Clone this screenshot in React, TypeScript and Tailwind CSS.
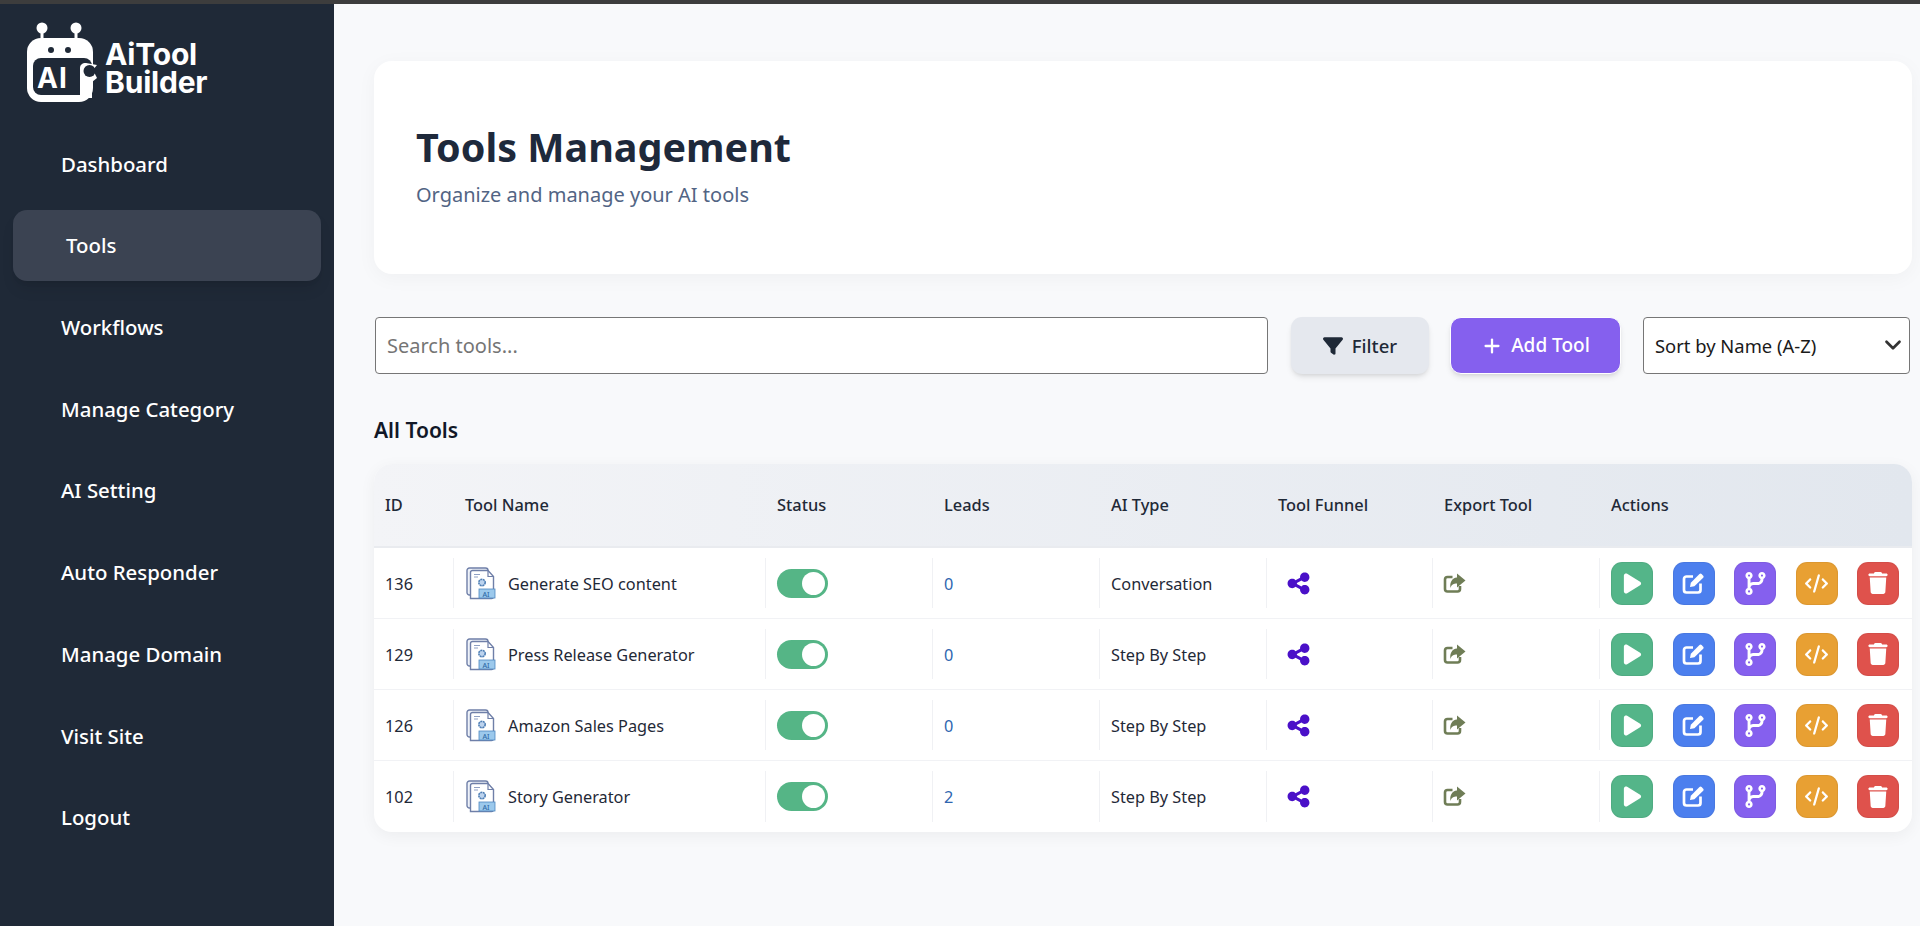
import { FaCode, FaCodeBranch, FaFilter, FaPlay, FaShareNodes, FaTrash } from "react-icons/fa6";
import { ChevronDown, Plus } from "lucide-react";

const navItems = ["Dashboard", "Tools", "Workflows", "Manage Category", "AI Setting", "Auto Responder", "Manage Domain", "Visit Site", "Logout"];

const tools = [
  { id: 136, name: "Generate SEO content", leads: 0, type: "Conversation" },
  { id: 129, name: "Press Release Generator", leads: 0, type: "Step By Step" },
  { id: 126, name: "Amazon Sales Pages", leads: 0, type: "Step By Step" },
  { id: 102, name: "Story Generator", leads: 2, type: "Step By Step" },
];

const columns = "grid grid-cols-[80px_312px_167px_167px_167px_166px_167px_1fr]";

function Logo() {
  return (
    <svg width="74" height="86" viewBox="0 0 74 86" className="shrink-0">
      <line x1="16" y1="8" x2="16" y2="20" stroke="#fff" strokeWidth="3" />
      <line x1="50" y1="8" x2="50" y2="20" stroke="#fff" strokeWidth="3" />
      <circle cx="16" cy="6" r="5.5" fill="#fff" />
      <circle cx="50" cy="6" r="5.5" fill="#fff" />
      <rect x="1" y="16" width="66" height="64" rx="14" fill="#fff" />
      <circle cx="25" cy="28" r="3" fill="#1f2937" />
      <circle cx="42" cy="28" r="3" fill="#1f2937" />
      <rect x="7" y="36" width="59" height="37" rx="8" fill="#1f2937" />
      <path d="M54 76 V46 C54 43 56 41 60 41 L71 43 L67 48 L71 56 L66 60 V76 Z" fill="#fff" />
      <circle cx="63.5" cy="49" r="6" fill="#1f2937" />
      <text x="11" y="66" fill="#fff" fontFamily="Inter, sans-serif" fontWeight="700" fontSize="28" letterSpacing="1">AI</text>
    </svg>
  );
}

function ToolIcon() {
  return (
    <svg width="32" height="33" viewBox="0 0 32 33" fill="none" className="ml-px shrink-0">
      <rect x="1" y="1" width="21" height="27" rx="2.5" fill="#eef2f9" stroke="#6f7fa8" strokeWidth="1.4" />
      <path d="M4.5 31.5 H25.5 A2 2 0 0 0 27.5 29.5 V9.5 L22 3.5 H6.5 A2 2 0 0 0 4.5 5.5 Z" fill="#fff" stroke="#6f7fa8" strokeWidth="1.4" />
      <path d="M22 3.5 V9.5 H27.5" stroke="#6f7fa8" strokeWidth="1.2" />
      <path d="M8 7.5 H14 M8 10 H12" stroke="#8fa0c4" strokeWidth="1" />
      <circle cx="16" cy="15.5" r="3.2" fill="#bcd3ee" stroke="#4f7fb5" strokeWidth="1.6" strokeDasharray="2 0.6" />
      <rect x="13" y="22" width="16" height="9" fill="#9cc9ec" stroke="#4f88c0" strokeWidth="0.8" />
      <text x="16.5" y="29.5" fill="#2f6ca8" fontFamily="Noto Sans, sans-serif" fontSize="7" fontWeight="500">AI</text>
    </svg>
  );
}

function ExportIcon() {
  return (
    <svg width="23" height="21" viewBox="0 0 23 21" className="-ml-px text-[#6f7d56]">
      <path d="M9.5 4 H4.5 A2.5 2.5 0 0 0 2 6.5 V16 A2.5 2.5 0 0 0 4.5 18.5 H14.5 A2.5 2.5 0 0 0 17 16 V13" fill="none" stroke="currentColor" strokeWidth="2.6" />
      <path d="M14 0.5 L22.5 7.5 L14 14.5 V10.5 C10.5 10.5 8.5 11.5 7.5 15 C6.5 9.5 9 5 14 4.5 Z" fill="currentColor" />
    </svg>
  );
}

function EditIcon() {
  return (
    <svg width="23" height="23" viewBox="0 0 23 23">
      <path d="M11 4.5 H4.5 A2.5 2.5 0 0 0 2 7 V18 A2.5 2.5 0 0 0 4.5 20.5 H16 A2.5 2.5 0 0 0 18.5 18 V11.5" fill="none" stroke="#fff" strokeWidth="2.7" />
      <path d="M8 15 L8.8 10.8 L17.5 2.1 A1.5 1.5 0 0 1 19.6 2.1 L21.2 3.7 A1.5 1.5 0 0 1 21.2 5.8 L12.4 14.3 Z" fill="#fff" />
    </svg>
  );
}

function Toggle() {
  return (
    <span className="flex h-[29px] w-[51px] items-center justify-end rounded-full bg-[#55b586] pr-[3px]">
      <span className="h-[23px] w-[23px] rounded-full bg-white" />
    </span>
  );
}

function ActionButton({ color, children }: { color: string; children: React.ReactNode }) {
  return (
    <button className={`flex h-[43px] w-[42px] items-center justify-center rounded-[11px] border border-black/5 text-white ${color}`}>
      {children}
    </button>
  );
}

function Cell({ children, last }: { children: React.ReactNode; last?: boolean }) {
  return (
    <div className={`my-[10px] flex items-center pl-[11px] ${last ? "" : "border-r border-[#f0f1f4]"}`}>
      {children}
    </div>
  );
}

export default function App() {
  return (
    <div className="flex h-[926px] flex-col overflow-hidden bg-[#f8f9fb] font-['Noto_Sans',sans-serif] text-[#1f2937]">
      <div className="h-1 bg-[#3d3d3d]" />
      <div className="flex min-h-0 flex-1">
        {/* Sidebar */}
        <aside className="w-[334px] shrink-0 bg-[#1f2937] text-white">
          <div className="flex items-start pl-[26px] pt-[18px]">
            <Logo />
            <div className="ml-[5px] mt-[18px] font-['Inter',sans-serif] text-[30px] font-bold leading-[28px] tracking-[-0.2px]">
              AiTool
              <br />
              Builder
            </div>
          </div>
          <nav className="mt-[20.5px] px-[13px]">
            {navItems.map((item) => (
              <a
                key={item}
                className={`mb-[10.7px] flex h-[71px] items-center rounded-[14px] text-[20.4px] font-medium ${
                  item === "Tools" ? "bg-[#3b4352] pl-[53px] shadow-lg" : "pl-[48px]"
                }`}
              >
                {item}
              </a>
            ))}
          </nav>
        </aside>

        {/* Main */}
        <main className="min-w-0 flex-1 bg-[#f8f9fb] pl-[40px] pr-[8px] pt-[57px]">
          <section className="flex h-[213px] flex-col justify-center rounded-[18px] bg-white pb-[4px] pl-[42px] shadow-[0_4px_20px_rgba(0,0,0,0.04)]">
            <h1 className="text-[39.5px] font-bold leading-[50px] text-[#1e293b]">Tools Management</h1>
            <p className="mt-[9px] text-[20px] leading-[28px] text-[#526484]">Organize and manage your AI tools</p>
          </section>

          <div className="mt-[43px] flex h-[57px] items-stretch">
            <input
              placeholder="Search tools..."
              className="ml-px w-[893px] rounded-[4px] border border-[#767676] bg-white px-[11px] text-[20px] placeholder:text-[#757575]"
            />
            <button className="ml-[23px] flex w-[138px] items-center justify-center gap-[9px] rounded-[11px] bg-[#e5e8ee] text-[18.5px] font-medium shadow-md">
              <FaFilter className="text-[20px]" /> Filter
            </button>
            <button className="ml-[21px] flex w-[171px] items-center justify-center gap-[8px] rounded-[11px] border border-white bg-[#8560ee] text-[19px] font-medium text-white shadow-md">
              <Plus size={22} strokeWidth={2.5} /> Add Tool
            </button>
            <div className="relative ml-[22px] w-[267px]">
              <select className="h-full w-full appearance-none rounded-[4px] border border-[#767676] bg-white px-[11px] text-[18.4px] text-[#1a1a1a]">
                <option>Sort by Name (A-Z)</option>
              </select>
              <ChevronDown size={26} strokeWidth={2.5} className="pointer-events-none absolute right-[4px] top-[15px] text-[#333]" />
            </div>
          </div>

          <h2 className="mt-[42px] text-[21px] font-semibold leading-[28px] text-[#111827]">All Tools</h2>

          <div className="mt-[20px] overflow-hidden rounded-[18px] bg-white shadow-[0_4px_16px_rgba(0,0,0,0.05)]">
            <div className={`${columns} h-[84px] items-center border-b-2 border-[#e9ebef] bg-gradient-to-r from-[#f3f4f7] to-[#e2e7ee] text-[16.4px] font-medium`}>
              {["ID", "Tool Name", "Status", "Leads", "AI Type", "Tool Funnel", "Export Tool", "Actions"].map((h) => (
                <div key={h} className="pl-[11px]">{h}</div>
              ))}
            </div>
            {tools.map((tool) => (
              <div key={tool.id} className={`${columns} h-[71px] border-b border-[#f1f2f5] text-[16.3px] text-[#1f2937] last:border-b-0`}>
                <Cell><span className="pt-[2px]">{tool.id}</span></Cell>
                <Cell>
                  <ToolIcon />
                  <span className="ml-[10px] pt-[2px]">{tool.name}</span>
                </Cell>
                <Cell><Toggle /></Cell>
                <Cell><span className="pt-[2px] text-[#2f66b0]">{tool.leads}</span></Cell>
                <Cell><span className="pt-[2px]">{tool.type}</span></Cell>
                <Cell><FaShareNodes className="ml-[8px] text-[25px] text-[#4a10c8]" /></Cell>
                <Cell><ExportIcon /></Cell>
                <Cell last>
                  <div className="flex gap-[19.5px]">
                    <ActionButton color="bg-[#54b589]"><FaPlay className="text-[23px]" /></ActionButton>
                    <ActionButton color="bg-[#4c7fee]"><EditIcon /></ActionButton>
                    <ActionButton color="bg-[#8560ee]"><FaCodeBranch className="text-[23px]" /></ActionButton>
                    <ActionButton color="bg-[#e8a033]"><FaCode className="text-[23px]" /></ActionButton>
                    <ActionButton color="bg-[#df524c]"><FaTrash className="text-[22px]" /></ActionButton>
                  </div>
                </Cell>
              </div>
            ))}
          </div>
        </main>
      </div>
    </div>
  );
}
